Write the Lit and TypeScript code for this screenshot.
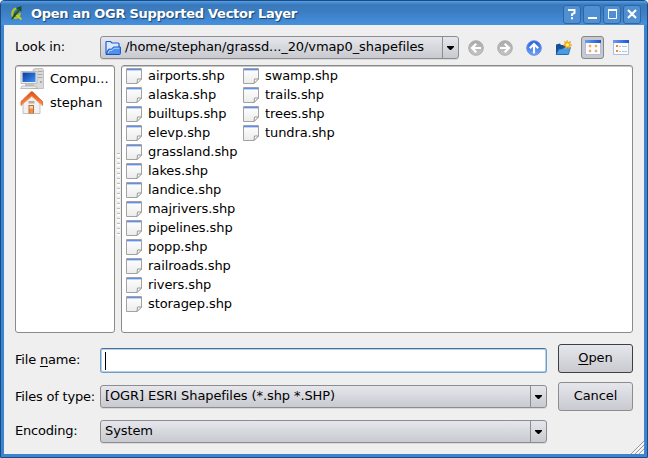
import { LitElement, html, svg, css } from "lit";
import { customElement, property } from "lit/decorators.js";

const files = [
  "airports.shp", "alaska.shp", "builtups.shp", "elevp.shp", "grassland.shp", "lakes.shp", "landice.shp",
  "majrivers.shp", "pipelines.shp", "popp.shp", "railroads.shp", "rivers.shp", "storagep.shp",
  "swamp.shp", "trails.shp", "trees.shp", "tundra.shp",
];

const gradients = svg`<defs>
  <linearGradient id="g" x1="0" y1="0" x2="0" y2="1"><stop offset="0" stop-color="#a9a9a9"/><stop offset="1" stop-color="#c6c6c6"/></linearGradient>
  <linearGradient id="b" x1="0" y1="0" x2="0" y2="1"><stop offset="0" stop-color="#2860d8"/><stop offset="1" stop-color="#6ba4ff"/></linearGradient>
  <linearGradient id="p" x1="0" y1="0" x2="0" y2="1"><stop offset="0" stop-color="#fff"/><stop offset="1" stop-color="#ececec"/></linearGradient>
  <linearGradient id="s" x1="0" y1="0" x2="1" y2="1"><stop offset="0" stop-color="#0a3b9c"/><stop offset="1" stop-color="#3e92f4"/></linearGradient>
  <linearGradient id="h" x1="0" y1="0" x2="1" y2="0"><stop offset="0" stop-color="#6a9ff5"/><stop offset="1" stop-color="#1c55cf"/></linearGradient>
  <linearGradient id="r" x1="0" y1="0" x2="0" y2="1"><stop offset="0" stop-color="#e0521a"/><stop offset="1" stop-color="#ff8a45"/></linearGradient>
</defs>`;

const icons: Record<string, { w: number; h: number; art: unknown }> = {
  file: { w: 16, h: 16, art: svg`
    <path d="M.5 .5H15.5V11L11 15.5H.5Z" fill="url(#p)" stroke="#a2a2a2"/>
    <path d="M1 1.5H15" stroke="#5f8ef0"/><path d="M1 2.5H15" stroke="#c3d3fb"/>
    <path d="M11 15.5L15.5 11H11.5Z" fill="#fff" stroke="#999"/>` },
  folder: { w: 16, h: 16, art: svg`
    <path d="M1 13.5V2.5Q1 1.5 2 1.5H5.5L7 3H13Q14 3 14 4V7" fill="#d9e8ff" stroke="#1c5fd0" stroke-width="1.2"/>
    <path d="M1 14.2L3.5 9.2H6.5L8.5 7H15.4V13.5Q15.4 14.5 14.4 14.5H1Z" fill="#4f91ee" stroke="#1553bd"/>
    <path d="M3.2 13L4.5 10.4H7L9 8.2H14.4" fill="none" stroke="#b8d6ff"/>` },
  back: { w: 16, h: 16, art: svg`
    <circle cx="8" cy="8" r="7.3" fill="url(#g)" stroke="#adadad"/>
    <path d="M13 8H4.5M8.3 3.8L4 8L8.3 12.2" fill="none" stroke="#fff" stroke-width="2.2"/>` },
  forward: { w: 16, h: 16, art: svg`
    <circle cx="8" cy="8" r="7.3" fill="url(#g)" stroke="#adadad"/>
    <path d="M3 8H11.5M7.7 3.8L12 8L7.7 12.2" fill="none" stroke="#fff" stroke-width="2.2"/>` },
  up: { w: 16, h: 16, art: svg`
    <circle cx="8" cy="8" r="7.3" fill="url(#b)" stroke="#6a8fe0"/>
    <path d="M8 13.5V4.5M3.8 8.3L8 4L12.2 8.3" fill="none" stroke="#fff" stroke-width="2.2"/>` },
  newFolder: { w: 17, h: 16, art: svg`
    <path d="M1 14V4.5L5 3.5L6 5H12L14 7V13L12 15H2Z" fill="#174f94"/>
    <path d="M1 14.5L4 9H7L9 7.5H15.5L13.5 14.5Z" fill="#4a9be4" stroke="#1b62ad" stroke-width=".7"/>
    <path d="M12 0L13.2 2.3L15.8 1.4L15 3.9L17 5.2L14.8 6.1L15 8.6L12.6 7.5L10.4 9L10.4 6.4L8 5.2L10.1 3.8L9.3 1.3L11.6 2.3Z" fill="#f4b51b" stroke="#dc9818" stroke-width=".4"/>
    <circle cx="12.4" cy="4.8" r="1.6" fill="#fff27a"/>` },
  list: { w: 16, h: 15, art: svg`
    <path d="M.5 .5H15.5V14.5H.5Z" fill="#fafcff" stroke="#a9bde6"/><path d="M0 0H16V3H0Z" fill="url(#h)"/>
    <path d="M4 5H6V7H4ZM10 5H12V7H10ZM4 10H6V12H4ZM10 10H12V12H10Z" fill="#ff8416" stroke="#ffc58c" stroke-width=".6"/>` },
  detail: { w: 16, h: 15, art: svg`
    <path d="M.5 .5H15.5V14.5H.5Z" fill="#fafcff" stroke="#a9bde6"/><path d="M0 0H16V3H0Z" fill="url(#h)"/>
    <path d="M3 5H5V7H3ZM3 10H5V12H3Z" fill="#ff8416"/><path d="M6 6.5H8M9 6.5H14M6 11.5H8M9 11.5H14" stroke="#bcc3cf"/>` },
  computer: { w: 24, h: 22, art: svg`
    <path d="M13 1.5L15 .5H22.5L23.5 2V20.5H13Z" fill="#dadada" stroke="#b0b0b0" stroke-width=".7"/>
    <path d="M18 3.5H22.5M18 6.5H22.5M18 9.5H22.5" stroke="#a8a8a8"/><circle cx="21" cy="14" r="1" fill="#8fa48f"/>
    <path d="M1 3.5H17V15.5H1Z" fill="#f0f0f0" stroke="#bcbcbc"/><path d="M2.5 4.5H15.5V14H2.5Z" fill="url(#s)"/>
    <path d="M5 16H13V18H5Z" fill="#c4c4c4"/><path d="M2 18H15L18 20.5H.5Z" fill="#ededed" stroke="#a5a5a5" stroke-width=".7"/>` },
  home: { w: 24, h: 24, art: svg`
    <path d="M3 10L11.5 5L20 10V22.5H3Z" fill="#f1f1f1" stroke="#b5b5b5" stroke-width=".8"/>
    <path d="M8.5 14H14V22.5H8.5Z" fill="#a9714c"/><path d="M9.5 15H13V22H9.5Z" fill="#ff8a35"/><path d="M9.5 15H13V17.5H9.5Z" fill="#ffd0a4"/>
    <path d="M11 .8H12.5L22.5 10.5V14.5L11.7 5.2L1 14.5V10.5Z" fill="url(#r)" stroke="#cf5a24" stroke-width=".7"/>
    <path d="M11.7 5.2L22 14M11.7 5.2L1.5 14" fill="none" stroke="#ffb98c" stroke-width=".7"/>
    <path d="M8.5 10H14.5V12.5H8.5Z" fill="#b9aca5"/>` },
  app: { w: 14, h: 16, art: svg`
    <path d="M6 3.5Q2.5 4.5 2.3 9Q2.3 13 5.5 13Q9.5 12.5 9.8 8" fill="none" stroke="#b9c41c" stroke-width="2.2"/>
    <path d="M6.5 10L11.5 14.5" stroke="#c9cf20" stroke-width="2"/>
    <path d="M11.5 1V6.5L9.7 5.5L6.5 9.5L3 14L1 14.5L4 9L7.5 4.2L6.5 2.8Z" fill="#1e4f20"/>
    <path d="M8.5 4L5.5 8" stroke="#5f8d26" stroke-width=".8"/>` },
  arrow: { w: 7, h: 4, art: svg`<path d="M0 0H7V1L4 4H3L0 1Z" fill="#000"/>` },
  help: { w: 10, h: 12, art: svg`<path d="M2 3V2H7.5V5L5 6.3V8M5 9.3V11.3" fill="none" stroke="#fff" stroke-width="2"/>` },
  min: { w: 10, h: 12, art: svg`<path d="M1 9H10V11H1Z" fill="#fff"/>` },
  max: { w: 10, h: 12, art: svg`<path d="M1.5 2.5H9.5V10.5H1.5Z" fill="none" stroke="#fff"/><path d="M1 2H10" stroke="#fff" stroke-width="2"/>` },
  close: { w: 10, h: 12, art: svg`<path d="M1 2L9 10M9 2L1 10" stroke="#fff" stroke-width="2.2"/>` },
  grip: { w: 13, h: 13, art: svg`
    <path d="M0 13L13 0M4 13L13 4M8 13L13 8" stroke="#999"/><path d="M1.5 13L13 1.5M5.5 13L13 5.5M9.5 13L13 9.5" stroke="#fff"/>` },
};

@customElement("ui-icon")
class UiIcon extends LitElement {
  @property() name = "file";
  static styles = css`:host { display: block; flex: none; } svg { display: block; overflow: visible; }`;
  render() {
    const i = icons[this.name];
    return html`<svg width=${i.w} height=${i.h} viewBox="0 0 ${i.w} ${i.h}">${gradients}${i.art}</svg>`;
  }
}

@customElement("combo-box")
class ComboBox extends LitElement {
  @property() icon = "";
  @property() value = "";
  static styles = css`
    :host { display: flex; box-sizing: border-box; height: 23px; border: 1px solid #8d8d90; border-radius: 3px;
      background: linear-gradient(#e6e7ed, #c9cacf); box-shadow: 0 1px 0 #d9d9d9; }
    .value { flex: 1; display: flex; align-items: center; gap: 4px; padding: 0 0 0 4px; white-space: nowrap; }
    .value span { padding-bottom: 2px; }
    .drop { width: 15px; border-left: 1px solid #8d8d90; display: flex; align-items: center; justify-content: center; }
  `;
  render() {
    return html`<div class="value">${this.icon ? html`<ui-icon name=${this.icon}></ui-icon>` : ""}<span>${this.value}</span></div>
      <div class="drop"><ui-icon name="arrow"></ui-icon></div>`;
  }
}

@customElement("app-root")
class AppRoot extends LitElement {
  static styles = css`
    :host { display: block; }
    * { box-sizing: border-box; }
    .window { width: 648px; height: 458px; display: flex; flex-direction: column; overflow: hidden; color: #000;
      font: 13px/19px "DejaVu Sans", sans-serif; letter-spacing: -0.09px; background: #efefef;
      border: solid #1d4b7d; border-width: 1px; border-radius: 4px 4px 0 0; }
    .frame { flex: 1; display: flex; flex-direction: column; border: 3px solid #3b84d2; border-top: 0; }
    .title { height: 24px; margin: 0 -3px; padding: 0 6px 0 9px; display: flex; align-items: center; color: #fff; font-weight: bold;
      background: linear-gradient(#5a9fe4 0, #4089d6 2px, #3a78b8 4px, #3c7fc6 12px, #4690dd 100%); }
    .title span { flex: 1; margin-left: 7px; padding-top: 1px; letter-spacing: -0.28px; text-shadow: 1px 1px 1px #1b4270; white-space: nowrap; }
    .buttons { display: flex; gap: 2px; padding-top: 2px; }
    .tb { width: 18px; height: 19px; display: flex; align-items: center; justify-content: center;
      border: 1px solid #2e669f; border-radius: 3px; background: #4f8fd2; }
    .body { flex: 1; padding: 11px 11px 0; display: flex; flex-direction: column; position: relative; }
    .look { height: 23px; display: grid; grid-template-columns: 85px 359px 1fr; align-items: center; }
    .look-label { padding-bottom: 2px; }
    .tools { display: flex; align-items: center; padding-left: 9px; }
    .tools ui-icon { margin-right: 13px; }
    .tools .new { margin-right: 9px; }
    .tools .detail { margin: 0; }
    .active { width: 23px; height: 23px; border: 1px solid #88888b; border-radius: 3px; background: #c9c9cd;
      display: flex; align-items: center; justify-content: center; margin-right: 9px; }
    .tools .active ui-icon { margin: 0; }
    .panes { height: 268px; margin-top: 6px; display: grid; grid-template-columns: 100px 6px 512px; }
    .pane { background: #fff; border: 1px solid #8b8b8b; border-radius: 3px; box-shadow: inset 0 1px 0 #c6c6c6; }
    .place { height: 24px; display: flex; align-items: center; gap: 6px; padding-left: 4px; }
    .place span { padding-bottom: 2px; letter-spacing: 0; }
    .places { padding-top: 1px; }
    .files { display: grid; grid-template-rows: repeat(13, 19px); grid-auto-flow: column; grid-template-columns: 117px 110px; padding-left: 4px; }
    .file { display: flex; align-items: center; gap: 6px; white-space: nowrap; }
    .handle { align-self: center; justify-self: center; width: 3px; height: 84px; margin-bottom: 8px;
      background: repeating-linear-gradient(#bcbcbc 0 1px, #fff 1px 3px, transparent 3px 5px); }
    .form { margin-top: 11px; display: grid; grid-template-columns: 85px 447px 75px; }
    .labels { display: flex; flex-direction: column; padding-top: 6px; gap: 18px; white-space: nowrap; letter-spacing: -0.2px; }
    .labels .enc { margin-top: -3px; }
    .fields { display: flex; flex-direction: column; padding-top: 4px; }
    .input { height: 25px; border: 1px solid #6e9cc6; border-top-color: #4b7096; border-radius: 3px; background: #fff;
      box-shadow: inset 0 0 0 1px #b4cfe8; padding: 3px 4px; margin-bottom: 12px; }
    .caret { width: 1px; height: 18px; background: #000; }
    .fields combo-box + combo-box { margin-top: 12px; }
    .actions { display: flex; flex-direction: column; gap: 9px; width: 75px; margin-left: 11px; }
    .btn { height: 29px; border: 1px solid #8d8d90; border-radius: 3px; background: linear-gradient(#e6e7ed, #c9cacf);
      display: flex; justify-content: center; align-items: center; padding-bottom: 2px; }
    .default { border-color: #3f3f42; }
    u { text-underline-offset: 2px; }
    .grip { position: absolute; right: 0; bottom: 0; }
  `;
  render() {
    return html`<div class="window"><div class="frame">
      <div class="title"><ui-icon name="app"></ui-icon><span>Open an OGR Supported Vector Layer</span>
        <div class="buttons">${["help", "min", "max", "close"].map((n) => html`<div class="tb"><ui-icon name=${n}></ui-icon></div>`)}</div></div>
      <div class="body">
        <div class="look"><div class="look-label">Look in:</div><combo-box icon="folder" value="/home/stephan/grassd..._20/vmap0_shapefiles"></combo-box>
          <div class="tools"><ui-icon name="back"></ui-icon><ui-icon name="forward"></ui-icon><ui-icon name="up"></ui-icon>
            <ui-icon class="new" name="newFolder"></ui-icon><div class="active"><ui-icon name="list"></ui-icon></div><ui-icon class="detail" name="detail"></ui-icon></div></div>
        <div class="panes">
          <div class="pane places"><div class="place"><ui-icon name="computer"></ui-icon><span>Compu...</span></div><div class="place"><ui-icon name="home"></ui-icon><span>stephan</span></div></div>
          <div class="handle"></div>
          <div class="pane files">${files.map((f) => html`<div class="file"><ui-icon name="file"></ui-icon>${f}</div>`)}</div>
        </div>
        <div class="form">
          <div class="labels"><div>File <u>n</u>ame:</div><div>Files of type:</div><div class="enc">Encoding:</div></div>
          <div class="fields"><div class="input"><div class="caret"></div></div>
            <combo-box value="[OGR] ESRI Shapefiles (*.shp *.SHP)"></combo-box><combo-box value="System"></combo-box></div>
          <div class="actions"><div class="btn default"><span><u>O</u>pen</span></div><div class="btn">Cancel</div></div>
        </div>
        <ui-icon class="grip" name="grip"></ui-icon>
      </div></div></div>`;
  }
}
